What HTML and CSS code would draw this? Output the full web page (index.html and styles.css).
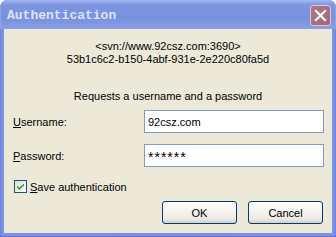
FILE: index.html
```html
<!DOCTYPE html>
<html>
<head>
<meta charset="utf-8">
<link rel="stylesheet" href="styles.css">
</head>
<body>
<div class="window">
  <div class="titlebar">
    <span class="title">Authentication</span>
    <div class="close">
      <svg width="13" height="13" viewBox="0 0 13 13"><path d="M2 2 L11 11 M11 2 L2 11" stroke="#ffffff" stroke-width="2.2" stroke-linecap="square"/></svg>
    </div>
  </div>
  <div class="client">
    <div class="realm">&lt;svn://www.92csz.com:3690&gt;<br>53b1c6c2-b150-4abf-931e-2e220c80fa5d</div>
    <div class="request">Requests a username and a password</div>
    <div class="row row-user">
      <span class="label"><u>U</u>sername:</span>
      <div class="field">92csz.com</div>
    </div>
    <div class="row row-pass">
      <span class="label"><u>P</u>assword:</span>
      <div class="field"><span class="stars">******</span></div>
    </div>
    <div class="check-row">
      <span class="checkbox">
        <svg width="11" height="11" viewBox="0 0 11 11"><path d="M2 4.5 L4.2 7 L9 2.5 L9 4.5 L4.2 9 L2 6.5 Z" fill="#21a121"/></svg>
      </span>
      <span class="check-label"><u>S</u>ave authentication</span>
    </div>
    <div class="buttons">
      <div class="btn">OK</div>
      <div class="btn">Cancel</div>
    </div>
  </div>
</div>
</body>
</html>
```
FILE: styles.css
```css
html, body {
  margin: 0;
  padding: 0;
  background: #ffffff;
}
.window {
  width: 336px;
  height: 237px;
  display: flex;
  flex-direction: column;
  background: linear-gradient(90deg, #6b80dc 0, #7d93e2 2px, #7b91e0 50%, #7d93e2 calc(100% - 2px), #6b80dc 100%);
  border-radius: 7px 7px 0 0;
  overflow: hidden;
  box-sizing: border-box;
  border-bottom: 1px solid #5e72d4;
}
.titlebar {
  height: 29px;
  flex: none;
  display: flex;
  align-items: center;
  justify-content: space-between;
  padding: 0 5px 0 7px;
  background: linear-gradient(#a8baf2 0, #93a9ec 2px, #7d95e1 5px, #7891de 18px, #8198e3 24px, #8ba1e6 29px);
  border-radius: 7px 7px 0 0;
  box-shadow: inset 1px 0 #8fa3ea, inset -1px 0 #8fa3ea;
}
.title {
  font-family: "Liberation Mono", monospace;
  font-weight: bold;
  font-size: 13px;
  color: #d9e4f9;
  margin-top: 1px;
}
.close {
  width: 19px;
  height: 19px;
  border: 1px solid #dcc6d2;
  border-radius: 3px;
  background: linear-gradient(135deg, #b07889, #a0657a);
  display: flex;
  align-items: center;
  justify-content: center;
  margin-top: 1px;
}
.client {
  flex: 1;
  margin: 0 4px 3px 4px;
  background: #ece9d8;
  font-family: "Liberation Sans", Arial, sans-serif;
  font-size: 11px;
  color: #000000;
  display: flex;
  flex-direction: column;
  padding-top: 11px;
}
.realm {
  text-align: center;
  line-height: 13px;
}
.request {
  text-align: center;
  line-height: 13px;
  margin-top: 24px;
}
.row {
  display: flex;
  align-items: center;
  padding-left: 9px;
  height: 23px;
}
.row-user {
  margin-top: 7px;
}
.row-pass {
  margin-top: 11px;
}
.label {
  width: 131px;
}
.field {
  height: 21px;
  border: 1px solid #7f9db9;
  background: #ffffff;
  display: flex;
  align-items: center;
  padding-left: 3px;
  box-sizing: content-box;
  width: 175px;
}
.stars {
  font-size: 14px;
  letter-spacing: 1px;
  line-height: 14px;
  margin-top: 2px;
}
.check-row {
  display: flex;
  align-items: center;
  padding-left: 10px;
  margin-top: 13px;
  height: 13px;
}
.checkbox {
  width: 11px;
  height: 11px;
  border: 1px solid #1c5180;
  background: linear-gradient(135deg, #dcdcd7, #ffffff);
  display: flex;
  align-items: center;
  justify-content: center;
}
.check-label {
  margin-left: 3px;
}
.buttons {
  display: flex;
  justify-content: flex-end;
  gap: 11px;
  padding-right: 9px;
  margin-top: 8px;
}
.btn {
  width: 73px;
  height: 21px;
  border: 1px solid #003c74;
  border-radius: 3px;
  background: linear-gradient(#ffffff 0, #f5f4ef 40%, #ecebe4 80%, #d6d0c5 100%);
  display: flex;
  align-items: center;
  justify-content: center;
}
```
